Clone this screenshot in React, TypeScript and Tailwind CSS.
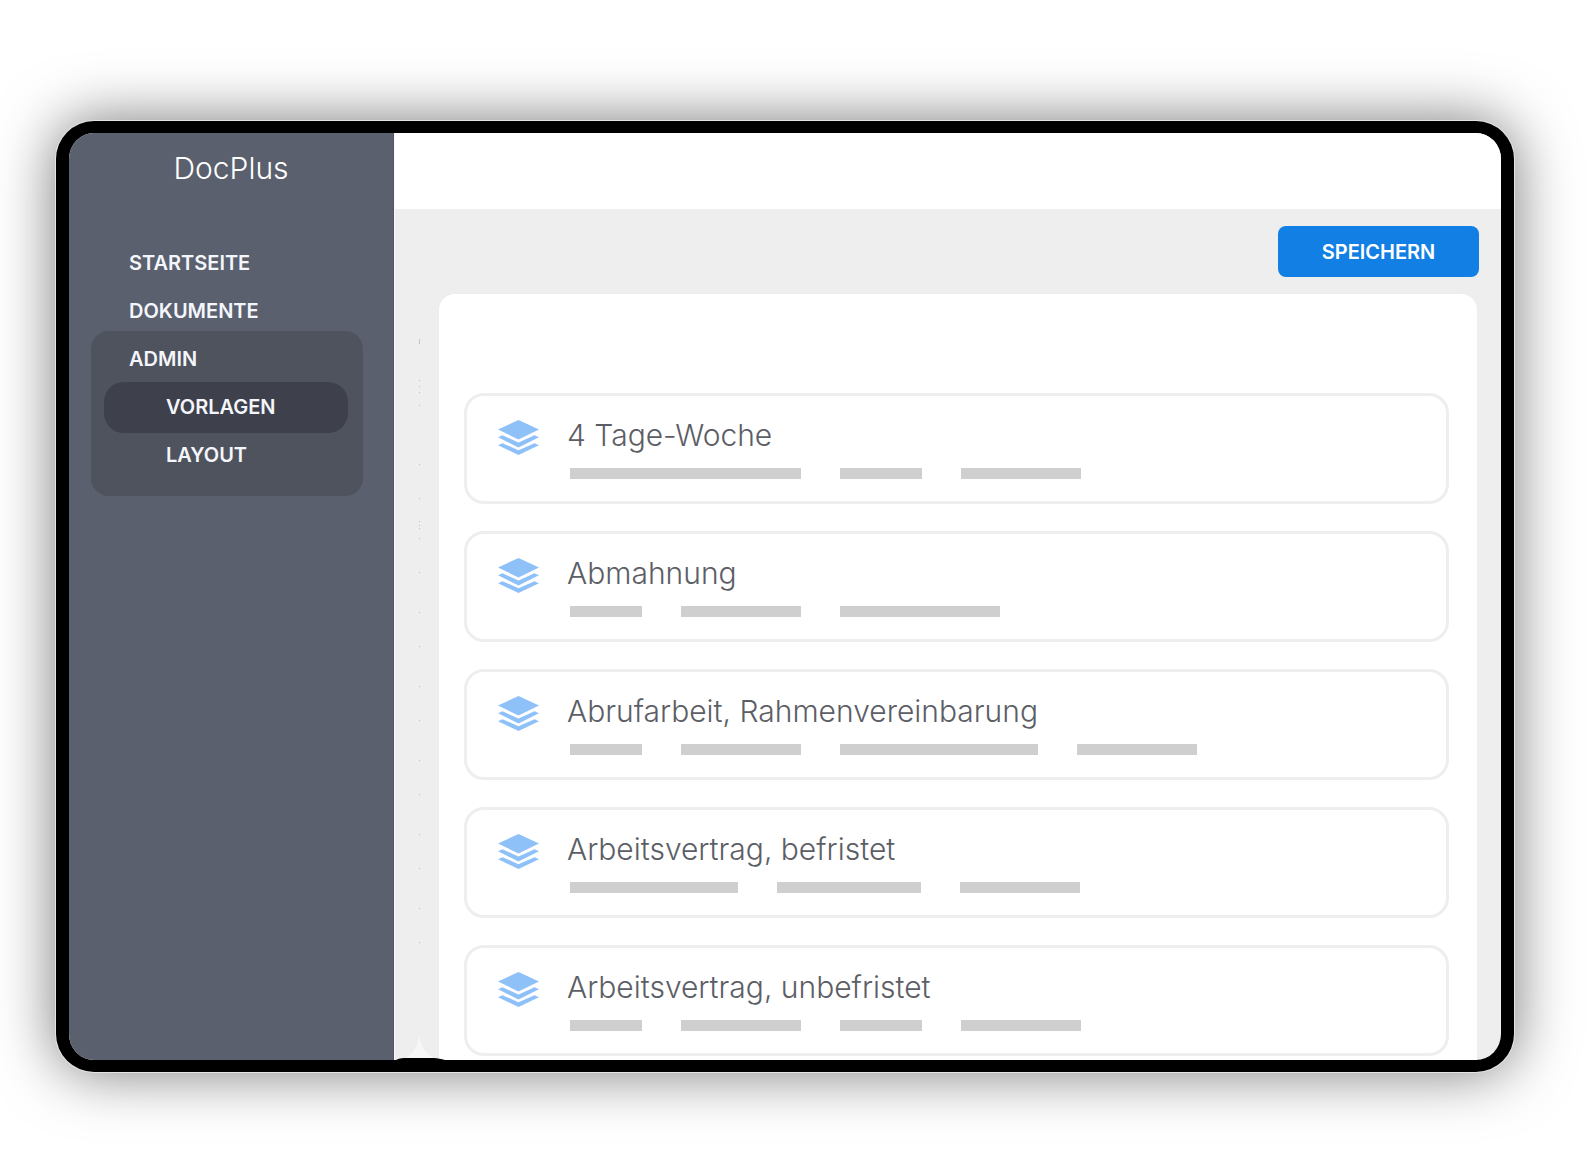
import clsx from "clsx"

interface Template {
  title: string
  bars: string[]
}

const templates: Template[] = [
  { title: "4 Tage-Woche", bars: ["w-[231px]", "w-[82px]", "w-[120px]"] },
  { title: "Abmahnung", bars: ["w-[72px]", "w-[120px]", "w-[160px]"] },
  { title: "Abrufarbeit, Rahmenvereinbarung", bars: ["w-[72px]", "w-[120px]", "w-[198px]", "w-[120px]"] },
  { title: "Arbeitsvertrag, befristet", bars: ["w-[168px]", "w-[144px]", "w-[120px]"] },
  { title: "Arbeitsvertrag, unbefristet", bars: ["w-[72px]", "w-[120px]", "w-[82px]", "w-[120px]"] },
]

// y positions of the faint ticks along the gutter
const ticks = [47, 53, 59, 72, 131, 165, 188, 192, 195, 205, 239, 279, 313, 353, 387, 427, 461, 501, 535, 575, 609]

function LayersIcon() {
  return (
    <svg className="mt-6 h-[35px] w-[41px] shrink-0 fill-[#8fc1f9]" viewBox="0 0 41 35" aria-hidden="true">
      <path d="M20.5 0 41 9.5 20.5 19.5 0 9.5Z" />
      <path d="M0 17.3 4.5 15.3 20.5 22.6 36.5 15.3 41 17.3 20.5 27.4Z" />
      <path d="M0 25.2 4.5 23.2 20.5 30.2 36.5 23.2 41 25.2 20.5 35Z" />
    </svg>
  )
}

function TemplateCard({ title, bars }: Template) {
  return (
    <li className="flex h-[111px] gap-7 rounded-[20px] border-[3px] border-[#eeeeee] pl-[31px]">
      <LayersIcon />
      <div className="pt-[19px]">
        <h2 className="text-[30px] leading-[40px] font-light text-[#5c5e66]">{title}</h2>
        <div className="mt-[13px] ml-[3px] flex gap-[39px]">
          {bars.map((width, index) => (
            <span key={index} className={clsx("h-[11px] bg-[#cfcfcf]", width)} />
          ))}
        </div>
      </div>
    </li>
  )
}

function Sidebar() {
  return (
    <aside className="w-[325px] shrink-0 border-r border-[#55566a] bg-[#5a606e] text-white">
      <div className="pt-[15px] text-center text-[30px] leading-[40px] font-light">DocPlus</div>
      <nav className="mt-[63px] flex flex-col px-[22px] text-[20px] leading-6 font-semibold text-[#f4f6fb]">
        <a href="#startseite" className="pl-[38px]">STARTSEITE</a>
        <a href="#dokumente" className="mt-6 pl-[38px]">DOKUMENTE</a>
        <div className="mt-2 mr-2 flex flex-col rounded-[18px] bg-[#4f535e] pt-4 pr-[15px] pb-[29px] pl-[13px]">
          <a href="#admin" className="pl-[25px]">ADMIN</a>
          <a href="#vorlagen" className="mt-[11px] flex h-[51px] items-center rounded-[20px] bg-[#3e404b] pb-[2px] pl-[62px]">
            VORLAGEN
          </a>
          <a href="#layout" className="mt-[10px] pl-[62px]">LAYOUT</a>
        </div>
      </nav>
    </aside>
  )
}

function GutterMarks() {
  return (
    <svg className="absolute bottom-0 left-0 h-[727px] w-[52px]" viewBox="0 0 52 727" aria-hidden="true">
      <rect x="24" y="6" width="1" height="5" fill="#c4c4c4" />
      {ticks.map((y) => (
        <rect key={y} x="24" y={y} width="1" height="1" fill="#bdbdbd" />
      ))}
      <path d="M24 702C26 713 30 720 38 725H11C19 720 23 713 24 702Z" fill="#f6f6f6" />
      <path d="M1 727C5 725 8 725 12 725H39C43 725 46 726 50 727Z" fill="#000" />
    </svg>
  )
}

export default function App() {
  return (
    <div className="min-h-screen bg-white pt-[121px] pr-[76px] pb-[103px] pl-[56px] font-['Inter',sans-serif]">
      <div className="flex overflow-hidden rounded-[38px] border-x-[13px] border-y-[12px] border-black bg-[#eeeeee] shadow-[0_0_0_1px_#e4e4e4,0_0_60px_rgba(0,0,0,0.54)]">
        <Sidebar />
        <div className="relative min-w-0 flex-1 border-l border-[#f8f8f8]">
          <header className="h-[76px] bg-white" />
          <main className="pr-[22px] pl-[44px]">
            <div className="flex justify-end py-[17px]">
              <button
                type="button"
                className="h-[51px] w-[201px] rounded-lg bg-[#127fe4] text-[20px] font-semibold text-white"
              >
                SPEICHERN
              </button>
            </div>
            <ul className="mr-[2px] flex flex-col gap-[27px] rounded-t-[16px] bg-white pt-[99px] pr-7 pb-1 pl-[25px]">
              {templates.map((template) => (
                <TemplateCard key={template.title} {...template} />
              ))}
            </ul>
          </main>
          <GutterMarks />
        </div>
      </div>
    </div>
  )
}
